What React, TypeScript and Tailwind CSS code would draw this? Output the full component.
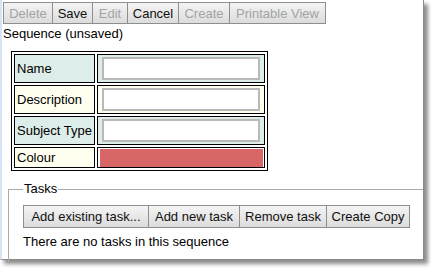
import React from 'react'

const btn =
  'h-[22px] border border-[#8e8e8e] bg-gradient-to-b from-[#f4f4f4] to-[#dcdcdc] text-[13px] leading-none text-center -mr-px'

const toolbar = [
  { label: 'Delete', w: 'w-[50px]', disabled: true },
  { label: 'Save', w: 'w-[41px]', active: true },
  { label: 'Edit', w: 'w-[36px]', disabled: true },
  { label: 'Cancel', w: 'w-[52px]' },
  { label: 'Create', w: 'w-[52px]', disabled: true },
  { label: 'Printable View', w: 'w-[97px]', disabled: true },
]

const taskButtons = [
  { label: 'Add existing task...', w: 'w-[126px]' },
  { label: 'Add new task', w: 'w-[92px]' },
  { label: 'Remove task', w: 'w-[88px]' },
  { label: 'Create Copy', w: 'w-[84px]' },
]

function Field({ label, bg, children }: { label: string; bg: string; children: React.ReactNode }) {
  return (
    <tr>
      <td className={`border border-black ${bg} px-[2px] w-[83px] align-middle`}>{label}</td>
      <td className={`border border-black ${bg} p-0 align-middle`}>{children}</td>
    </tr>
  )
}

export default function App() {
  return (
    <div className="w-[431px] h-[268px] bg-white overflow-hidden" style={{ fontFamily: '"Liberation Sans", Arial, sans-serif' }}>
      <div className="relative w-[424px] h-[260px] bg-white border-l-2 border-l-[#d5e3f4] border-r border-b border-[#8a8a8a] shadow-[4px_4px_4px_rgba(0,0,0,0.45)] text-[13px] text-black">
        <div className="flex pt-[2px] pl-px">
          {toolbar.map((b) => (
            <button
              key={b.label}
              className={`${btn} ${b.w} ${b.disabled ? 'text-[#a3a3a3]' : 'text-[#111]'} ${b.active ? 'border-[#3d7bad] relative z-10' : ''}`}
            >
              {b.label}
            </button>
          ))}
        </div>
        <div className="pl-px mt-[2px] leading-[16px]">Sequence (unsaved)</div>

        <table className="ml-[9px] mt-[9px] border border-black border-separate border-spacing-[2px] w-[257px] leading-[15px]">
          <tbody>
            <Field label="Name" bg="bg-[#ddede9]">
              <div className="px-[4px] py-[2px]">
                <div className="h-[23px] w-[158px] border-2 border-[#b9b9b9] bg-white" />
              </div>
            </Field>
            <Field label="Description" bg="bg-[#fffff0]">
              <div className="px-[4px] py-[2px]">
                <div className="h-[23px] w-[158px] border-2 border-[#b9b9b9] bg-white" />
              </div>
            </Field>
            <Field label="Subject Type" bg="bg-[#ddede9]">
              <div className="px-[4px] py-[2px]">
                <div className="h-[23px] w-[158px] border-2 border-[#b9b9b9] bg-white" />
              </div>
            </Field>
            <tr>
              <td className="border border-black bg-[#fffff0] px-[2px] h-[21px] leading-[15px]">Colour</td>
              <td className="border border-black bg-white pl-[2px] pr-px py-0">
                <div className="h-[18px] bg-[#d96666]" />
              </td>
            </tr>
          </tbody>
        </table>

        <fieldset className="ml-[6px] mt-[10px] h-[82px] border-l border-t border-[#a9a9a9] pl-[14px] pr-0 pt-[8px]">
          <legend className="px-[1px] leading-[16px]">Tasks</legend>
          <div className="flex">
            {taskButtons.map((b) => (
              <button key={b.label} className={`${btn} ${b.w} h-[23px] text-[#111]`}>
                {b.label}
              </button>
            ))}
          </div>
          <div className="mt-[6px] leading-[16px]">There are no tasks in this sequence</div>
        </fieldset>
      </div>
    </div>
  )
}
